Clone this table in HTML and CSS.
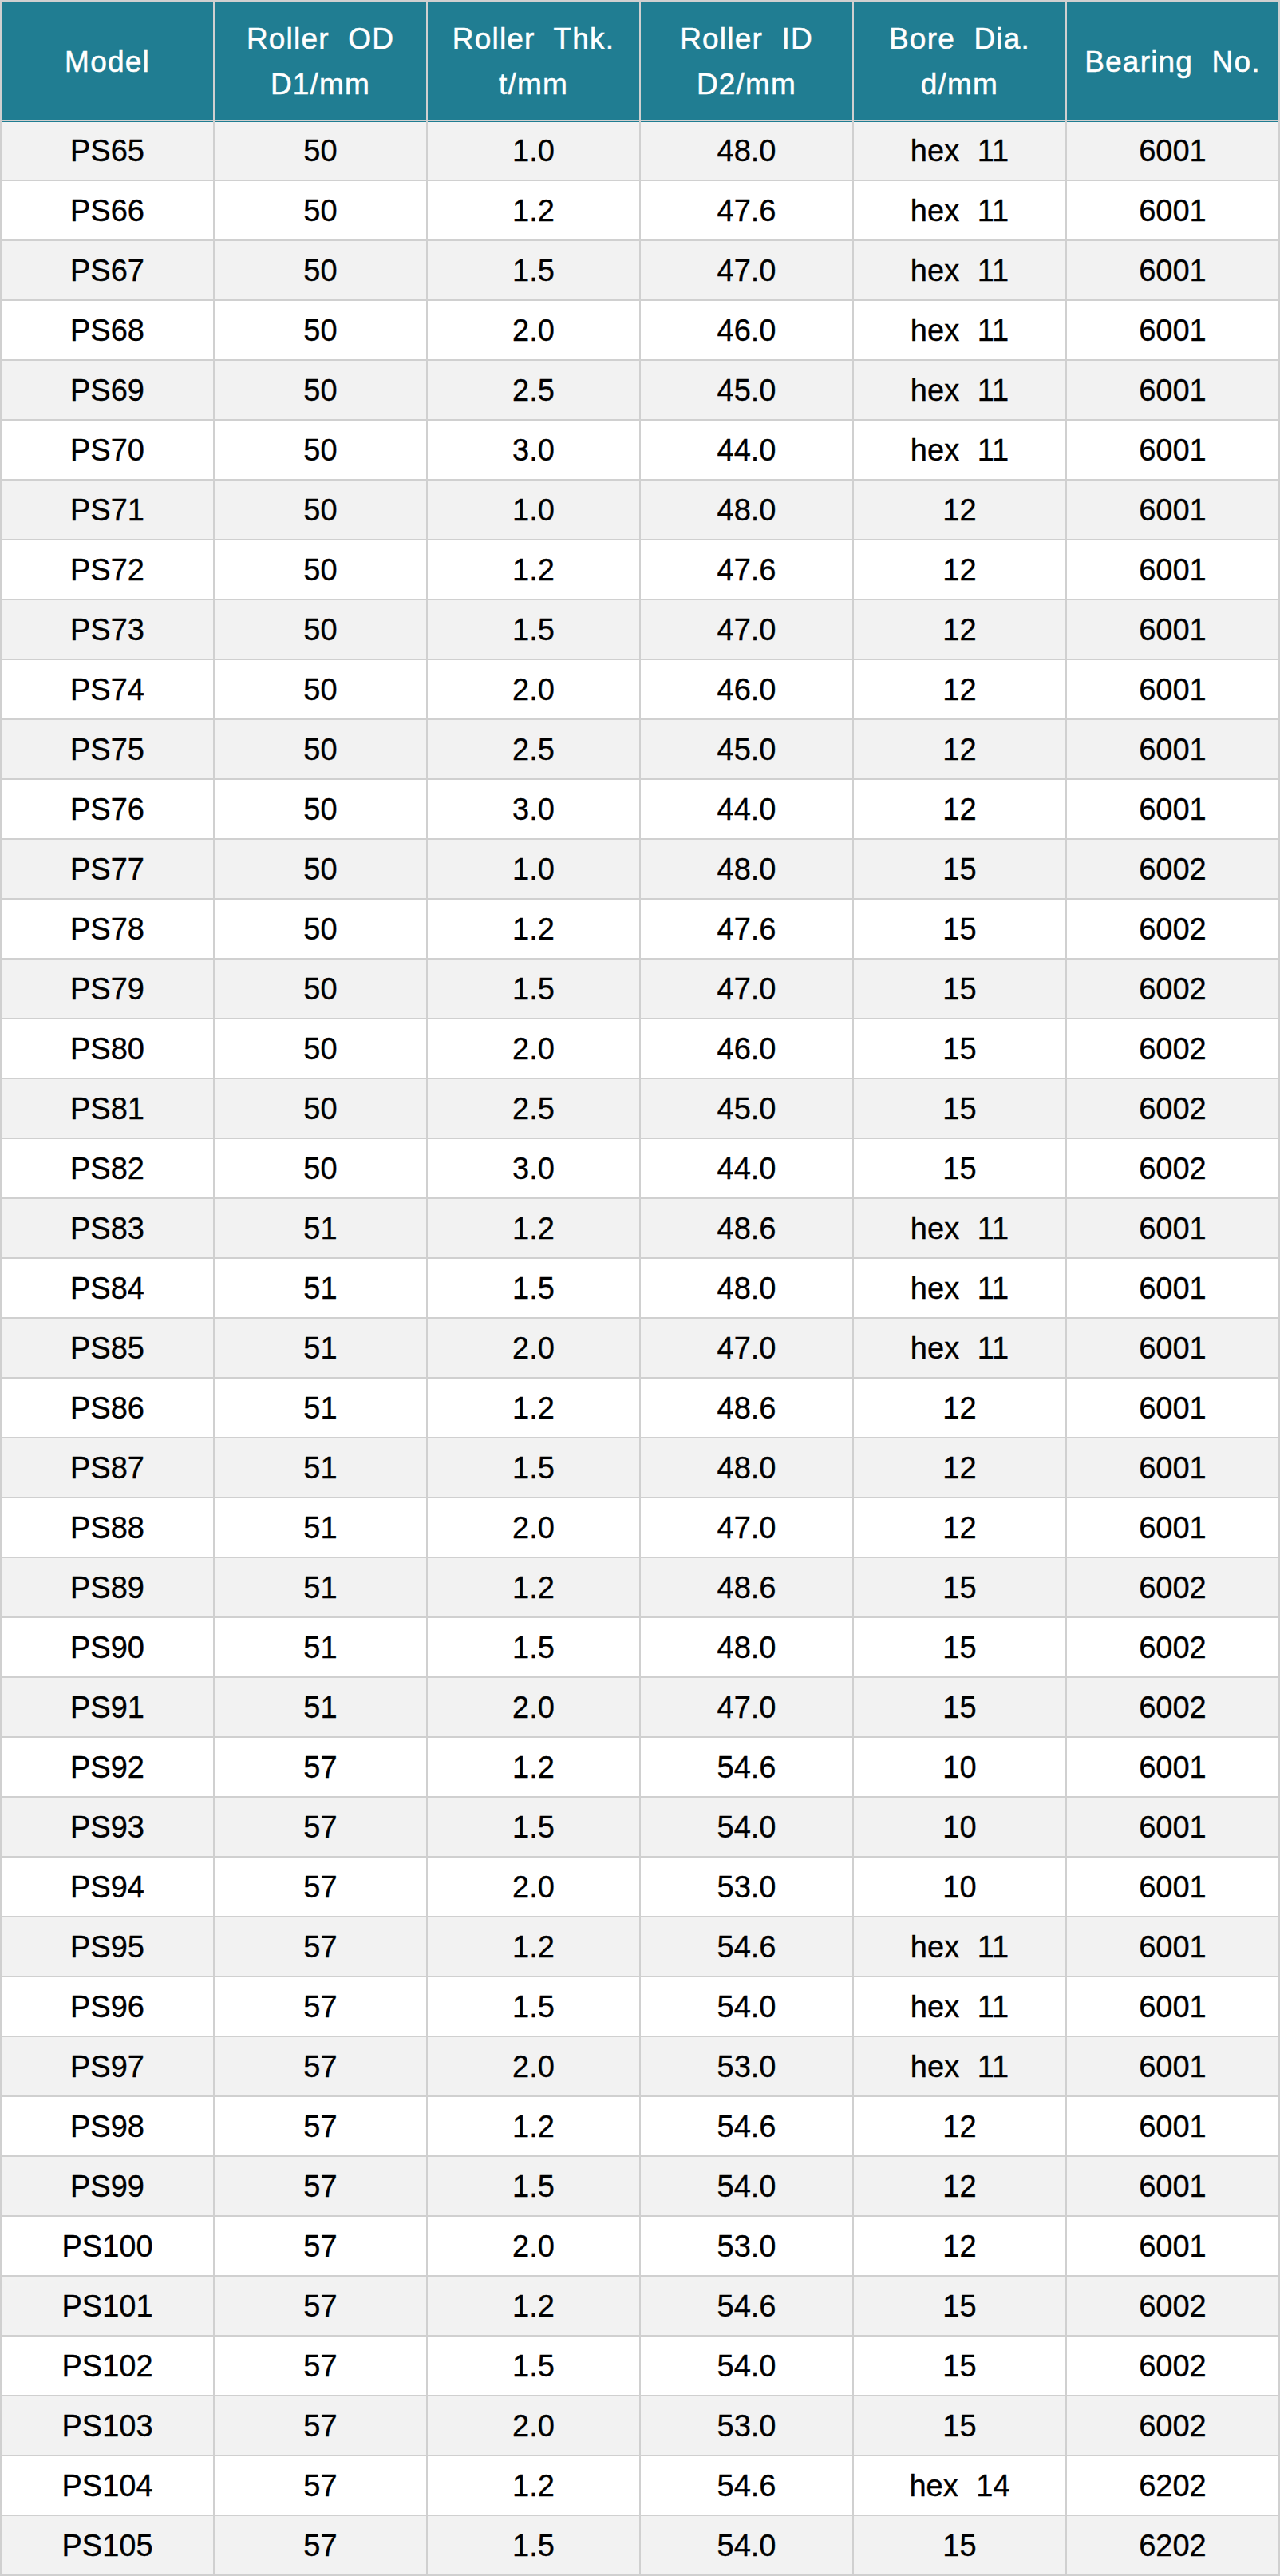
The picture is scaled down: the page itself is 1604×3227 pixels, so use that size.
FILE: index.html
```html
<!DOCTYPE html>
<html lang="en">
<head>
<meta charset="utf-8">
<title>Roller specifications</title>
<link rel="stylesheet" href="styles.css">
</head>
<body>
<div class="spec" id="spec">
  <div class="hd">Model</div>
  <div class="hd">Roller OD<br>D1/mm</div>
  <div class="hd">Roller Thk.<br>t/mm</div>
  <div class="hd">Roller ID<br>D2/mm</div>
  <div class="hd">Bore Dia.<br>d/mm</div>
  <div class="hd">Bearing No.</div>
</div>
<script src="app.js"></script>
</body>
</html>
```
FILE: app.js
```js
const rows = [
["PS65","50","1.0","48.0","hex 11","6001"],
["PS66","50","1.2","47.6","hex 11","6001"],
["PS67","50","1.5","47.0","hex 11","6001"],
["PS68","50","2.0","46.0","hex 11","6001"],
["PS69","50","2.5","45.0","hex 11","6001"],
["PS70","50","3.0","44.0","hex 11","6001"],
["PS71","50","1.0","48.0","12","6001"],
["PS72","50","1.2","47.6","12","6001"],
["PS73","50","1.5","47.0","12","6001"],
["PS74","50","2.0","46.0","12","6001"],
["PS75","50","2.5","45.0","12","6001"],
["PS76","50","3.0","44.0","12","6001"],
["PS77","50","1.0","48.0","15","6002"],
["PS78","50","1.2","47.6","15","6002"],
["PS79","50","1.5","47.0","15","6002"],
["PS80","50","2.0","46.0","15","6002"],
["PS81","50","2.5","45.0","15","6002"],
["PS82","50","3.0","44.0","15","6002"],
["PS83","51","1.2","48.6","hex 11","6001"],
["PS84","51","1.5","48.0","hex 11","6001"],
["PS85","51","2.0","47.0","hex 11","6001"],
["PS86","51","1.2","48.6","12","6001"],
["PS87","51","1.5","48.0","12","6001"],
["PS88","51","2.0","47.0","12","6001"],
["PS89","51","1.2","48.6","15","6002"],
["PS90","51","1.5","48.0","15","6002"],
["PS91","51","2.0","47.0","15","6002"],
["PS92","57","1.2","54.6","10","6001"],
["PS93","57","1.5","54.0","10","6001"],
["PS94","57","2.0","53.0","10","6001"],
["PS95","57","1.2","54.6","hex 11","6001"],
["PS96","57","1.5","54.0","hex 11","6001"],
["PS97","57","2.0","53.0","hex 11","6001"],
["PS98","57","1.2","54.6","12","6001"],
["PS99","57","1.5","54.0","12","6001"],
["PS100","57","2.0","53.0","12","6001"],
["PS101","57","1.2","54.6","15","6002"],
["PS102","57","1.5","54.0","15","6002"],
["PS103","57","2.0","53.0","15","6002"],
["PS104","57","1.2","54.6","hex 14","6202"],
["PS105","57","1.5","54.0","15","6202"]
];
const spec = document.getElementById("spec");
rows.forEach((r, i) => {
  r.forEach(v => {
    const c = document.createElement("div");
    c.className = "cell" + (i % 2 === 0 ? " alt" : "") + (i === 0 ? " first" : "");
    c.textContent = v;
    spec.appendChild(c);
  });
});
```
FILE: styles.css
```css
html, body {
  margin: 0;
  padding: 0;
  background: #ffffff;
}

.spec {
  box-sizing: border-box;
  width: 1604px;
  display: grid;
  grid-template-columns: repeat(6, 265px);
  grid-template-rows: 148px;
  grid-auto-rows: 73px;
  gap: 2px;
  padding: 2px;
  background: #d0d0d0;
  font-family: "Liberation Sans", Arial, sans-serif;
}

.hd {
  background: #207d92;
  color: #ffffff;
  font-size: 37px;
  line-height: 57px;
  letter-spacing: 1.2px;
  word-spacing: 12px;
  -webkit-text-stroke: 0.5px #ffffff;
  display: flex;
  align-items: center;
  justify-content: center;
  text-align: center;
  padding-top: 2px;
  box-sizing: border-box;
}

.cell {
  background: #ffffff;
  color: #000000;
  font-size: 38px;
  word-spacing: 12px;
  -webkit-text-stroke: 0.35px #000000;
  display: flex;
  align-items: center;
  justify-content: center;
  padding-top: 2px;
  box-sizing: border-box;
}

.cell.alt {
  background: #f2f2f2;
}

.cell.first {
  box-shadow: inset 0 1px 0 #207d92;
}
```
